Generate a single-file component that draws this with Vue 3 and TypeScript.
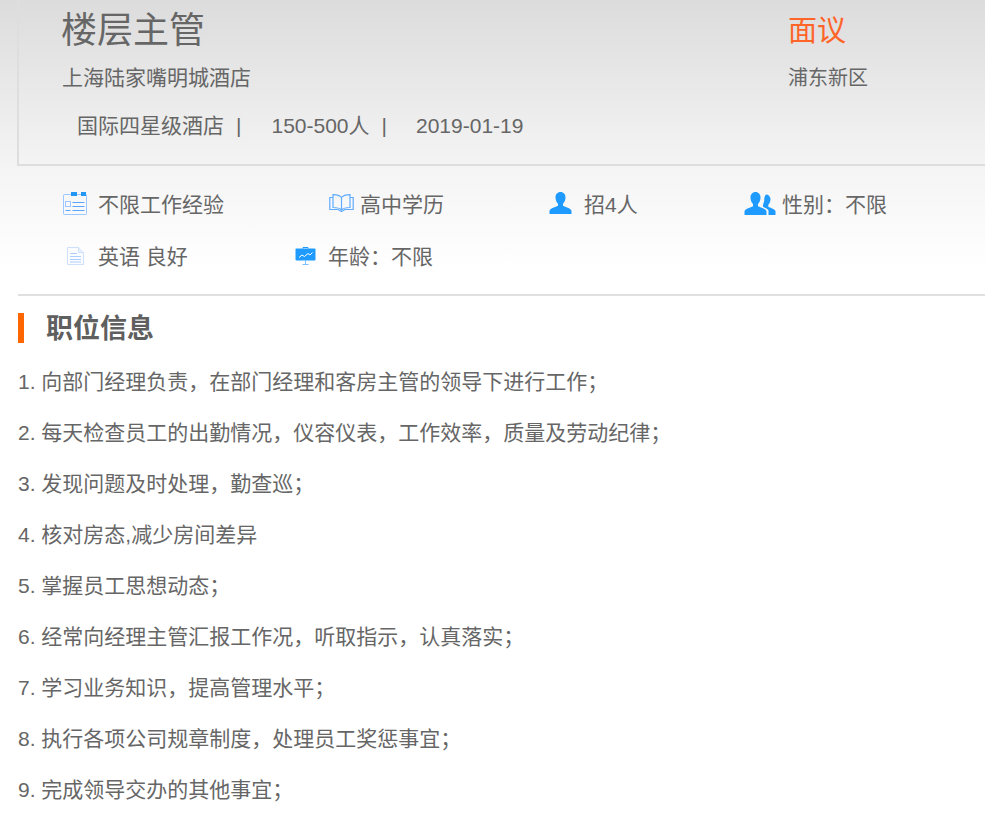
<script setup lang="ts">
const duties: string[] = [
  '向部门经理负责，在部门经理和客房主管的领导下进行工作；',
  '每天检查员工的出勤情况，仪容仪表，工作效率，质量及劳动纪律；',
  '发现问题及时处理，勤查巡；',
  '核对房态,减少房间差异',
  '掌握员工思想动态；',
  '经常向经理主管汇报工作况，听取指示，认真落实；',
  '学习业务知识，提高管理水平；',
  '执行各项公司规章制度，处理员工奖惩事宜；',
  '完成领导交办的其他事宜；',
]
</script>

<template>
  <main class="page">
    <section class="head">
      <div class="head-main">
        <h1 class="title">楼层主管</h1>
        <p class="company">上海陆家嘴明城酒店</p>
        <p class="facts">
          <span>国际四星级酒店</span><span class="sep">|</span>
          <span class="size">150-500人</span><span class="sep">|</span>
          <span class="date">2019-01-19</span>
        </p>
      </div>
      <div class="head-side">
        <p class="salary">面议</p>
        <p class="area">浦东新区</p>
      </div>
    </section>

    <section class="reqs">
      <div class="req-row">
        <div class="req r-exp">
          <svg class="ic" width="24" height="23" viewBox="0 0 24 23">
            <path d="M8 2.500H1.200a.7.7 0 0 0-.7.7v18.600c0 .4.3.7.7.7h21.600c.4 0 .7-.3.7-.7V3.200a.7.7 0 0 0-.7-.7H23M14 2.500h4" fill="none" stroke="#9cc8ff"/>
            <rect x="8" y="0" width="6" height="4" fill="#2196f3"/><rect x="18" y="0" width="5" height="4" fill="#2196f3"/>
            <rect x="2.500" y="9.500" width="5" height="5" fill="none" stroke="#9cc8ff"/>
            <path d="M9.500 10.500h12M9.500 14.500h12M9.500 18.500h12M2.500 18.500h5" stroke="#5aa6ff" fill="none"/>
          </svg>
          <span>不限工作经验</span>
        </div>
        <div class="req r-edu">
          <svg class="ic" width="25" height="18" viewBox="0 0 25 18">
            <path d="M12.500 3.500C10.500 1 7 .6 4 .6v12.900c3.500 0 6.500.4 8.500 2.500 2-2.100 5-2.500 8.500-2.500V.6c-3 0-6.500.4-8.500 2.900zM12.500 3.500V16" fill="none" stroke="#62acff" stroke-width="1.200"/>
            <path d="M4 3.500H.8v12h8.200l3.500 2 3.500-2h8.200v-12H21" fill="none" stroke="#62acff" stroke-width="1.200"/>
          </svg>
          <span>高中学历</span>
        </div>
        <div class="req r-num">
          <svg class="ic" width="23" height="22" viewBox="0 0 23 22">
            <path d="M11.500 0c3 0 5 2.300 5 5.500 0 2.500-1 4.800-2.500 6.200v2.100c2.500 1.200 7.500 2.300 8.500 5V22H.5v-3.200c1-2.700 6-3.800 8.500-5v-2.100C7.500 10.300 6.500 8 6.500 5.500c0-3.200 2-5.500 5-5.500z" fill="#1f9bff"/>
          </svg>
          <span>招4人</span>
        </div>
        <div class="req r-sex">
          <svg class="ic" width="32" height="23" viewBox="0 0 32 23">
            <path d="M11.500 0c3 0 5 2.400 5 5.500 0 2.600-1 5-2.500 6.400v2.300c2.500 1.200 7.500 2.300 8.500 5V23H.5v-3.800c1-2.700 6-3.800 8.500-5v-2.300C7.500 10.500 6.500 8.100 6.500 5.500c0-3.100 2-5.500 5-5.500z" fill="#1f9bff"/>
            <path d="M22 2.500c2.700 0 4.500 2.100 4.500 4.800 0 2.200-.8 4.200-2.200 5.500v2c2 1 6 2 7.200 4.300V23h-7v-4.500c-.8-1.700-4-2.800-5.500-3.700v-2.200c.7-1.500 1.300-3.500 1.300-5.400 0-1.500.5-3.500 1.700-4.700z" fill="#1f9bff"/>
          </svg>
          <span>性别：不限</span>
        </div>
      </div>
      <div class="req-row">
        <div class="req r-lang">
          <svg class="ic ic-low" width="17" height="18" viewBox="0 0 17 18">
            <path d="M.5.500h11l5 5v12H.5z" fill="#fafcff" stroke="#cfe0fb"/>
            <path d="M11.500.500v5h5" fill="#e6f0ff" stroke="#cfe0fb"/>
            <path d="M3 6.500h7M3 9.500h11M3 12.500h11M3 15h11" stroke="#aecffb" fill="none"/>
          </svg>
          <span>英语 良好</span>
        </div>
        <div class="req r-age">
          <svg class="ic ic-low" width="21" height="18" viewBox="0 0 21 18">
            <path d="M8 1.500V.5h5v1" fill="none" stroke="#1f9bff"/>
            <rect x="0.500" y="1.500" width="20" height="12" rx="1" fill="#1f9bff"/>
            <path d="M10.500 13.500V17M7.500 17.500h6" stroke="#7bbfff" fill="none"/>
            <path d="M4 10.500l3-2.500 2.500 1.500L13 6.500l2 1.500 2.500-2.500" fill="none" stroke="#fff"/>
          </svg>
          <span>年龄：不限</span>
        </div>
      </div>
    </section>

    <section class="info">
      <h2 class="info-title">职位信息</h2>
      <ol class="duties">
        <li v-for="(d, i) in duties" :key="i">{{ i + 1 }}. {{ d }}</li>
      </ol>
    </section>
  </main>
</template>

<style scoped>
.page {
  width: 985px;
  height: 817px;
  overflow: hidden;
  box-sizing: border-box;
  padding-left: 18px;
  color: #666;
  font-family: "Liberation Sans", "Noto Sans CJK SC", sans-serif;
  font-size: 21px;
  background: linear-gradient(#dcdcdc 0, #f4f4f4 166px, #ffffff 270px, #ffffff 100%);
}
p, h1, h2, ol { margin: 0; padding: 0; }
.head {
  height: 166px;
  margin-left: -1px;
  box-sizing: border-box;
  border-left: 2px solid #dedede;
  border-bottom: 2px solid #dedede;
  display: flex;
  padding-left: 43px;
}
.head-main { width: 726px; }
.title { font-size: 36px; font-weight: 400; line-height: 62px; margin-left: -1px; }
.company { line-height: 36px; margin-top: -2px; }
.facts { margin-top: 12px; padding-left: 15px; line-height: 36px; white-space: pre; }
.sep { margin-left: 12px; }
.size { margin-left: 30px; }
.date { margin-left: 29px; }
.salary { color: #ff6428; font-size: 29px; line-height: 62px; }
.area { font-size: 20px; line-height: 36px; margin-top: -2px; }
.reqs {
  height: 130px;
  box-sizing: border-box;
  border-bottom: 2px solid #e0e0e0;
  padding: 11px 0 0 44px;
}
.req-row { display: flex; height: 52px; align-items: center; }
.req { display: flex; align-items: center; flex: none; }
.r-exp { width: 267px; gap: 11px; padding-left: 1px; box-sizing: border-box; }
.r-edu { width: 220px; gap: 6px; }
.r-num { width: 195px; gap: 12px; }
.r-sex { gap: 6px; }
.r-lang { width: 233px; padding-left: 5px; gap: 14px; box-sizing: border-box; }
.r-age { gap: 12px; }
.ic { flex: none; display: block; }
.ic-low { margin-top: 2px; }
.info-title {
  margin-top: 17px;
  height: 30px;
  line-height: 32px;
  border-left: 6px solid #ff6600;
  padding-left: 22px;
  font-size: 27px;
  font-weight: 700;
  color: #5f5f5f;
}
.duties { list-style: none; margin-top: 13px; }
.duties li { line-height: 51px; white-space: nowrap; }
</style>
